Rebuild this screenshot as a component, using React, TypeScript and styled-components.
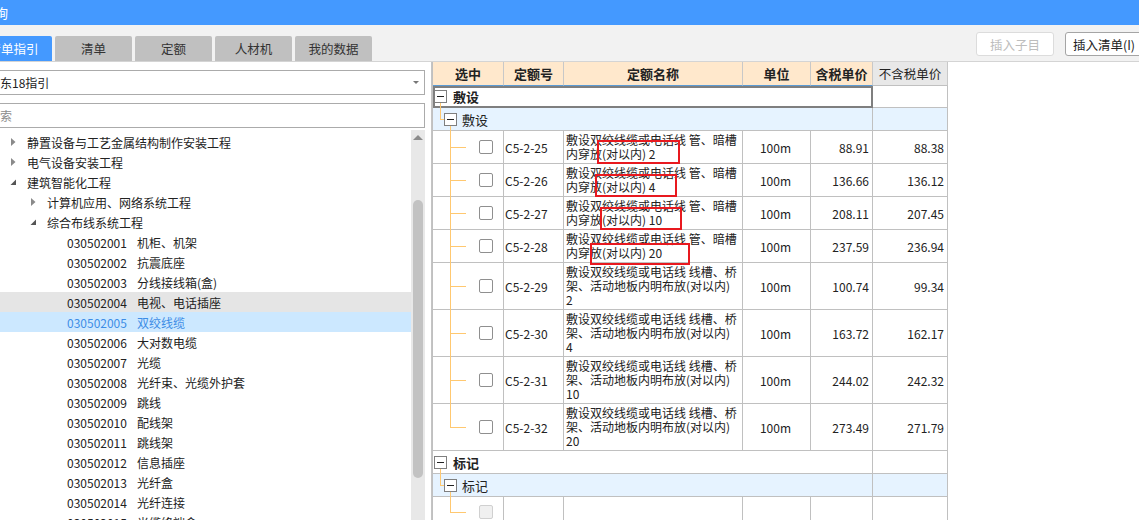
import React from 'react';
import styled, { createGlobalStyle } from 'styled-components';

const LINE = '#ffc870';
const GRID = '#c0c0c0';
const COLS = '71px 60px 179px 68px 62px 75px';

const GlobalStyle = createGlobalStyle`
  html, body { margin: 0; padding: 0; width: 1139px; height: 520px; overflow: hidden; background: #fff; }
  body { font-family: "Noto Sans CJK SC", "Noto Sans", sans-serif; font-size: 12px; color: #222; }
  #root { width: 1139px; height: 520px; }
`;

const Page = styled.div`
  display: flex;
  flex-direction: column;
  width: 1139px;
  height: 520px;
  overflow: hidden;
`;

const TitleBar = styled.div`
  flex: none;
  height: 25px;
  background: #4499ff;
  color: #fff;
  font-size: 13px;
  line-height: 25px;
  white-space: nowrap;
  overflow: hidden;
`;

const TitleText = styled.span`
  display: inline-block;
  margin-left: -18px;
`;

const Toolbar = styled.div`
  flex: none;
  height: 36px;
  display: flex;
  justify-content: space-between;
  align-items: flex-start;
  background: #f2f2f2;
  border-bottom: 1px solid #d4d4d4;
  overflow: hidden;
`;

const Tabs = styled.div`
  display: flex;
  gap: 3px;
  margin-left: -25px;
  padding-top: 11px;
`;

const Tab = styled.div<{ $active?: boolean }>`
  width: 77px;
  height: 25px;
  display: flex;
  align-items: center;
  justify-content: center;
  font-size: 12.5px;
  border-radius: 2px 2px 0 0;
  background: ${p => (p.$active ? '#4499ff' : '#c0c0c0')};
  color: ${p => (p.$active ? '#fff' : '#333')};
`;

const Actions = styled.div`
  display: flex;
  gap: 11px;
  padding-top: 7px;
  margin-right: -4px;
`;

const ActionButton = styled.div<{ $disabled?: boolean }>`
  width: 78px;
  height: 24px;
  box-sizing: border-box;
  display: flex;
  align-items: center;
  justify-content: center;
  font-size: 12.5px;
  background: #fff;
  border-radius: 3px;
  border: 1px solid ${p => (p.$disabled ? '#dcdcdc' : '#a5a5a5')};
  color: ${p => (p.$disabled ? '#bdbdbd' : '#222')};
  white-space: nowrap;
`;

const Body = styled.div`
  flex: 1;
  min-height: 0;
  display: flex;
`;

const LeftPanel = styled.div`
  flex: none;
  width: 425px;
  display: flex;
  flex-direction: column;
  padding-top: 8px;
  box-sizing: border-box;
  overflow: hidden;
`;

const Select = styled.div`
  flex: none;
  width: 445px;
  height: 25px;
  margin-left: -20px;
  box-sizing: border-box;
  border: 1px solid #ababab;
  display: flex;
  align-items: center;
  padding: 0 5px 0 7px;
  font-size: 12px;
  color: #222;
  background: #fff;
`;

const Caret = styled.span`
  margin-left: auto;
  width: 0;
  height: 0;
  border-left: 3px solid transparent;
  border-right: 3px solid transparent;
  border-top: 3px solid #777;
`;

const Search = styled.input`
  flex: none;
  width: 445px;
  height: 25px;
  margin: 8px 0 0 -20px;
  box-sizing: border-box;
  border: 1px solid #ababab;
  padding: 0 0 0 7px;
  outline: none;
  font-family: inherit;
  font-size: 12px;
  color: #222;
  background: #fff;
  &::placeholder { color: #8c8c8c; }
`;

const TreeArea = styled.div`
  flex: 1;
  min-height: 0;
  margin-top: 2px;
  display: flex;
`;

const TreeList = styled.div`
  flex: 1;
  padding-top: 2px;
  overflow: hidden;
`;

const TreeRow = styled.div<{ $level: number; $state?: 'hover' | 'selected' }>`
  height: 20px;
  display: flex;
  align-items: center;
  padding-left: ${p => 6 + p.$level * 20}px;
  white-space: nowrap;
  font-size: 12px;
  background: ${p => (p.$state === 'hover' ? '#e5e5e5' : p.$state === 'selected' ? '#cce8ff' : 'transparent')};
  color: ${p => (p.$state === 'selected' ? '#3d8de6' : '#222')};
`;

const Toggle = styled.span`
  flex: none;
  width: 14px;
  height: 20px;
  margin-right: 7px;
  display: flex;
  align-items: center;
  justify-content: center;
`;

const Code = styled.span`
  margin-right: 10px;
`;

const ScrollTrack = styled.div`
  flex: none;
  width: 14px;
  background: #e8e8e8;
  display: flex;
  flex-direction: column;
  align-items: center;
`;

const ScrollUp = styled.span`
  margin-top: 5px;
  width: 0;
  height: 0;
  border-left: 5px solid transparent;
  border-right: 5px solid transparent;
  border-bottom: 5px solid #8c8c8c;
`;

const ScrollThumb = styled.div`
  width: 10px;
  background: #c2c2c2;
  border-radius: 5px;
`;

const Splitter = styled.div`
  flex: none;
  width: 6px;
  background: #fff;
`;

const TablePane = styled.div`
  flex: 1;
  min-width: 0;
  border-left: 1px solid #c4c4c4;
  overflow: hidden;
  background: #fff;
`;

const Table = styled.div`
  width: 516px;
  box-sizing: border-box;
  border-left: 1px solid ${GRID};
  font-size: 12px;
  color: #222;
`;

const Row = styled.div<{ $h: number; $cols?: string }>`
  display: grid;
  grid-template-columns: ${p => p.$cols || COLS};
  height: ${p => p.$h}px;
`;

const HeadCell = styled.div<{ $plain?: boolean }>`
  display: flex;
  align-items: center;
  justify-content: center;
  box-sizing: border-box;
  border-right: 1px solid #c8c8c8;
  border-bottom: 1px solid ${p => (p.$plain ? GRID : '#5b9bd5')};
  background: ${p => (p.$plain ? '#e8e8e8' : '#ffe8cc')};
  font-weight: ${p => (p.$plain ? 400 : 700)};
  font-size: ${p => (p.$plain ? '12.5px' : '13px')};
  white-space: nowrap;
`;

const Cell = styled.div<{ $align?: 'left' | 'center' | 'right'; $tint?: boolean }>`
  display: flex;
  align-items: center;
  justify-content: ${p => (p.$align === 'center' ? 'center' : p.$align === 'right' ? 'flex-end' : 'flex-start')};
  box-sizing: border-box;
  padding: 0 3px 0 1px;
  border-right: 1px solid ${GRID};
  border-bottom: 1px solid ${GRID};
  white-space: nowrap;
  background: ${p => (p.$tint ? '#e6f3ff' : '#fff')};
`;

const NameCell = styled.div`
  position: relative;
  box-sizing: border-box;
  padding: 2px 2px 0 2px;
  border-right: 1px solid ${GRID};
  border-bottom: 1px solid ${GRID};
  line-height: 14px;
  white-space: nowrap;
  background: #fff;
`;

const Mark = styled.span`
  position: absolute;
  box-sizing: border-box;
  border: 2px solid #e8191f;
  pointer-events: none;
  z-index: 2;
`;

const GroupCell = styled.div<{ $selected?: boolean }>`
  position: relative;
  display: flex;
  align-items: center;
  gap: 6px;
  box-sizing: border-box;
  padding-left: 1px;
  border-right: 1px solid ${GRID};
  border-bottom: 1px solid ${GRID};
  background: #fff;
  white-space: nowrap;
  ${p => (p.$selected ? 'outline: 2px solid #7f7f7f; outline-offset: -2px;' : '')}
  &::before {
    content: '';
    position: absolute;
    left: 7px;
    top: 17px;
    bottom: -1px;
    border-left: 1px solid ${LINE};
  }
`;

const SubCell = styled.div`
  position: relative;
  display: flex;
  align-items: center;
  gap: 5px;
  box-sizing: border-box;
  padding-left: 11px;
  border-right: 1px solid ${GRID};
  border-bottom: 1px solid ${GRID};
  background: #e6f3ff;
  white-space: nowrap;
  &::before {
    content: '';
    position: absolute;
    left: 7px;
    top: 0;
    width: 4px;
    height: 11px;
    border-left: 1px solid ${LINE};
    border-bottom: 1px solid ${LINE};
  }
  &::after {
    content: '';
    position: absolute;
    left: 17px;
    top: 17px;
    bottom: -1px;
    border-left: 1px solid ${LINE};
  }
`;

const Expander = styled.span`
  position: relative;
  z-index: 1;
  flex: none;
  width: 13px;
  height: 13px;
  box-sizing: border-box;
  border: 1px solid #7f7f7f;
  background: #fff;
  display: flex;
  align-items: center;
  justify-content: center;
  &::before {
    content: '';
    width: 7px;
    height: 1px;
    background: #222;
  }
`;

const GroupLabel = styled.span<{ $bold?: boolean }>`
  font-size: 13px;
  font-weight: ${p => (p.$bold ? 700 : 400)};
`;

const PickCell = styled.div<{ $last?: boolean }>`
  position: relative;
  display: flex;
  align-items: center;
  box-sizing: border-box;
  padding-left: 46px;
  border-right: 1px solid ${GRID};
  border-bottom: 1px solid ${GRID};
  background: #fff;
  &::before {
    content: '';
    position: absolute;
    left: 17px;
    top: 0;
    ${p => (p.$last ? 'height: 50%;' : 'bottom: -1px;')}
    border-left: 1px solid ${LINE};
  }
  &::after {
    content: '';
    position: absolute;
    left: 17px;
    top: 50%;
    width: 16px;
    border-top: 1px solid ${LINE};
  }
`;

const Check = styled.span<{ $disabled?: boolean }>`
  display: block;
  width: 14px;
  height: 14px;
  box-sizing: border-box;
  border: 1px solid ${p => (p.$disabled ? '#d0d0d0' : '#8f8f8f')};
  border-radius: 2px;
  background: ${p => (p.$disabled ? '#f0f0f0' : '#fff')};
`;

const Arrow = ({ open }: { open?: boolean }) =>
  open ? (
    <svg width="7" height="7" viewBox="0 0 7 7">
      <polygon points="6,0.5 6,6 0.5,6" fill="#555" />
    </svg>
  ) : (
    <svg width="5" height="8" viewBox="0 0 5 8">
      <polygon points="0,0 4.5,4 0,8" fill="#8a8a8a" />
    </svg>
  );

type TreeItem = { level: number; toggle?: 'open' | 'closed'; code?: string; text: string; state?: 'hover' | 'selected' };

const tree: TreeItem[] = [
  { level: 0, toggle: 'closed', text: '静置设备与工艺金属结构制作安装工程' },
  { level: 0, toggle: 'closed', text: '电气设备安装工程' },
  { level: 0, toggle: 'open', text: '建筑智能化工程' },
  { level: 1, toggle: 'closed', text: '计算机应用、网络系统工程' },
  { level: 1, toggle: 'open', text: '综合布线系统工程' },
  { level: 2, code: '030502001', text: '机柜、机架' },
  { level: 2, code: '030502002', text: '抗震底座' },
  { level: 2, code: '030502003', text: '分线接线箱(盒)' },
  { level: 2, code: '030502004', text: '电视、电话插座', state: 'hover' },
  { level: 2, code: '030502005', text: '双绞线缆', state: 'selected' },
  { level: 2, code: '030502006', text: '大对数电缆' },
  { level: 2, code: '030502007', text: '光缆' },
  { level: 2, code: '030502008', text: '光纤束、光缆外护套' },
  { level: 2, code: '030502009', text: '跳线' },
  { level: 2, code: '030502010', text: '配线架' },
  { level: 2, code: '030502011', text: '跳线架' },
  { level: 2, code: '030502012', text: '信息插座' },
  { level: 2, code: '030502013', text: '光纤盒' },
  { level: 2, code: '030502014', text: '光纤连接' },
  { level: 2, code: '030502015', text: '光缆终端盒' },
];

type Mk = { l: number; t: number; w: number; h: number };
type Item = { code: string; lines: string[]; price: string; net: string; mark?: Mk };

const pipe = '敷设双绞线缆或电话线 管、暗槽';
const tray = ['敷设双绞线缆或电话线 线槽、桥', '架、活动地板内明布放(对以内)'];

const items: Item[] = [
  { code: 'C5-2-25', lines: [pipe, '内穿放(对以内) 2'], price: '88.91', net: '88.38', mark: { l: 33, t: 9, w: 83, h: 24 } },
  { code: 'C5-2-26', lines: [pipe, '内穿放(对以内) 4'], price: '136.66', net: '136.12', mark: { l: 31, t: 10, w: 82, h: 23 } },
  { code: 'C5-2-27', lines: [pipe, '内穿放(对以内) 10'], price: '208.11', net: '207.45', mark: { l: 36, t: 10, w: 82, h: 23 } },
  { code: 'C5-2-28', lines: [pipe, '内穿放(对以内) 20'], price: '237.59', net: '236.94', mark: { l: 26, t: 13, w: 100, h: 22 } },
  { code: 'C5-2-29', lines: [...tray, '2'], price: '100.74', net: '99.34' },
  { code: 'C5-2-30', lines: [...tray, '4'], price: '163.72', net: '162.17' },
  { code: 'C5-2-31', lines: [...tray, '10'], price: '244.02', net: '242.32' },
  { code: 'C5-2-32', lines: [...tray, '20'], price: '273.49', net: '271.79' },
];

const tabs = ['清单指引', '清单', '定额', '人材机', '我的数据'];
const GROUP_COLS = '440px 75px';

const Group = ({ label, selected }: { label: string; selected?: boolean }) => (
  <>
    <Row $h={selected ? 22 : 23} $cols={GROUP_COLS}>
      <GroupCell $selected={selected}>
        <Expander />
        <GroupLabel $bold>{label}</GroupLabel>
      </GroupCell>
      <Cell />
    </Row>
    <Row $h={23} $cols={GROUP_COLS}>
      <SubCell>
        <Expander />
        <GroupLabel>{label}</GroupLabel>
      </SubCell>
      <Cell $tint />
    </Row>
  </>
);

export default function App() {
  return (
    <>
      <GlobalStyle />
      <Page>
        <TitleBar>
          <TitleText>查询</TitleText>
        </TitleBar>
        <Toolbar>
          <Tabs>
            {tabs.map((t, i) => (
              <Tab key={t} $active={i === 0}>
                {t}
              </Tab>
            ))}
          </Tabs>
          <Actions>
            <ActionButton $disabled>插入子目</ActionButton>
            <ActionButton>插入清单(I)</ActionButton>
          </Actions>
        </Toolbar>
        <Body>
          <LeftPanel>
            <Select>
              <span>广东18指引</span>
              <Caret />
            </Select>
            <Search placeholder="搜索" readOnly />
            <TreeArea>
              <TreeList>
                {tree.map((n, i) => (
                  <TreeRow key={i} $level={n.level} $state={n.state}>
                    <Toggle>{n.toggle ? <Arrow open={n.toggle === 'open'} /> : null}</Toggle>
                    {n.code ? <Code>{n.code}</Code> : null}
                    <span>{n.text}</span>
                  </TreeRow>
                ))}
              </TreeList>
              <ScrollTrack>
                <ScrollUp />
                <ScrollThumb style={{ marginTop: 60, height: 278 }} />
              </ScrollTrack>
            </TreeArea>
          </LeftPanel>
          <Splitter />
          <TablePane>
            <Table>
              <Row $h={24}>
                <HeadCell>选中</HeadCell>
                <HeadCell>定额号</HeadCell>
                <HeadCell>定额名称</HeadCell>
                <HeadCell>单位</HeadCell>
                <HeadCell>含税单价</HeadCell>
                <HeadCell $plain>不含税单价</HeadCell>
              </Row>
              <Group label="敷设" selected />
              {items.map((it, i) => (
                <Row key={it.code} $h={it.lines.length * 14 + 5}>
                  <PickCell $last={i === items.length - 1}>
                    <Check />
                  </PickCell>
                  <Cell>{it.code}</Cell>
                  <NameCell>
                    {it.lines.map((l, j) => (
                      <React.Fragment key={j}>
                        {j > 0 ? <br /> : null}
                        {l}
                      </React.Fragment>
                    ))}
                    {it.mark ? (
                      <Mark style={{ left: it.mark.l, top: it.mark.t, width: it.mark.w, height: it.mark.h }} />
                    ) : null}
                  </NameCell>
                  <Cell $align="center">100m</Cell>
                  <Cell $align="right">{it.price}</Cell>
                  <Cell $align="right">{it.net}</Cell>
                </Row>
              ))}
              <Group label="标记" />
              <Row $h={30}>
                <PickCell $last>
                  <Check $disabled />
                </PickCell>
                <Cell />
                <NameCell />
                <Cell />
                <Cell />
                <Cell />
              </Row>
            </Table>
          </TablePane>
        </Body>
      </Page>
    </>
  );
}
